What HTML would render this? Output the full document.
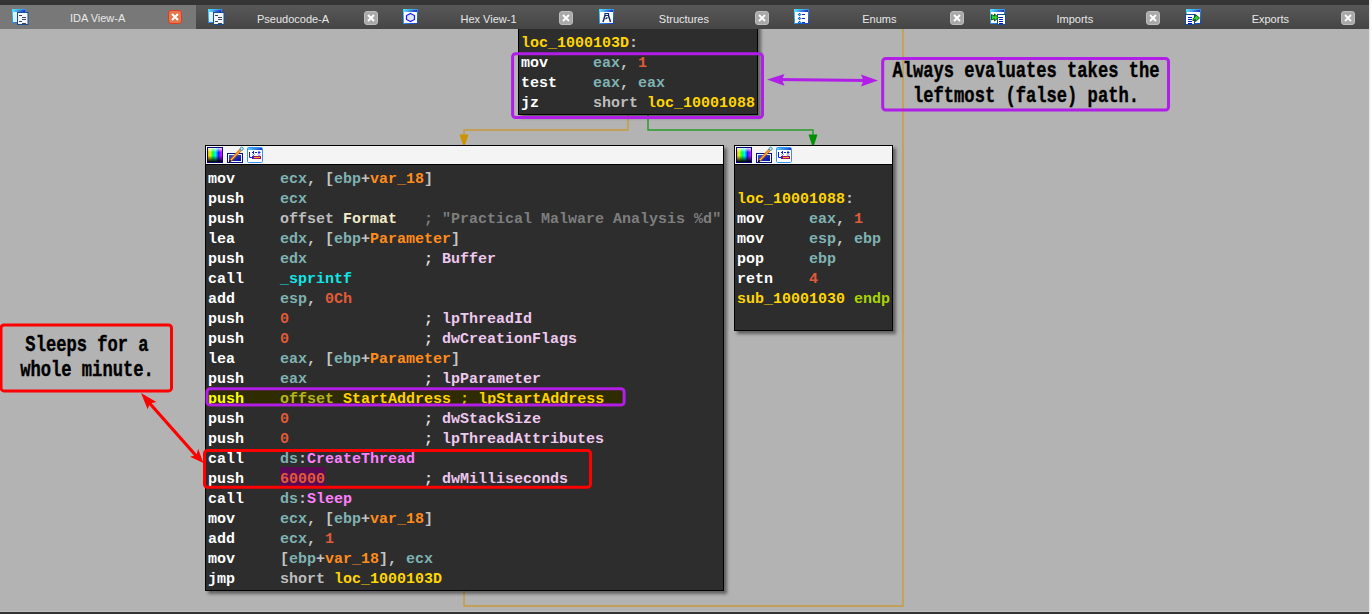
<!DOCTYPE html>
<html><head><meta charset="utf-8">
<style>
html,body{margin:0;padding:0}
body{width:1372px;height:614px;position:relative;overflow:hidden;background:#b3b3b3;font-family:"Liberation Sans",sans-serif}
.abs{position:absolute}
#topstrip{left:0;top:0;width:1369px;height:5px;background:#353535}
#tabbar{left:0;top:5px;width:1369px;height:24px;background:linear-gradient(#585858,#454545)}
#rstrip{left:1369px;top:0;width:3px;height:614px;background:linear-gradient(90deg,#e4e4e4,#fdfdfd 60%)}
#botline{left:0;top:611px;width:1369px;height:1px;background:#bdbdbd}
#botstrip{left:0;top:612px;width:1369px;height:2px;background:#323232}
.tab{position:absolute;top:5px;height:24px;width:195.57px}
.tab.active{background:#787878}
.tab .lbl{position:absolute;top:5px;left:0;width:100%;text-align:center;font-size:11px;color:#e8e8e8;line-height:14px}
.tab .cls{position:absolute;width:12px;height:12px;border:1px solid #bdbdbd;border-radius:3px;background:#a9a9a9;top:6px}
.tab.active .cls{background:#e2784f;border-color:#e03c25;top:5px}
.tab .cls svg{position:absolute;left:2px;top:2px}
.tab .ico{position:absolute;top:4px;width:16px;height:16px}

.node{position:absolute;background:#2d2d2d;border:1px solid #000;box-shadow:3px 3px 3px rgba(0,0,0,0.45)}
.hdr{position:absolute;left:0;right:0;top:0;height:18px;background:#f4f4f4;border-bottom:1px solid #000}
pre{margin:0;position:absolute;font-family:"Liberation Mono",monospace;font-weight:bold;font-size:15px;line-height:20px;color:#fff}
.m{color:#fff}
.r{color:#7fb2b2}
.p{color:#c4c4c4}
.k{color:#bdbdbd}
.n{color:#f0ecc8}
.v{color:#ff8c1a}
.d{color:#e05a38}
.c{color:#dcdcdc}
.ct{color:#eec8ee}
.s{color:#7e7e7e}
.f{color:#10e6e6}
.i{color:#ff80ff}
.l{color:#ffd500}
.e{color:#a8d400}
.note{position:absolute;font-family:"Liberation Mono",monospace;font-weight:bold;color:#000;text-align:center;white-space:pre;font-size:22px;line-height:25px;transform:scaleX(0.778);-webkit-text-stroke:0.4px #000;transform-origin:50% 0;z-index:6}
#topstrip,#tabbar{z-index:8}
.tab,.tabz{z-index:9}
</style></head><body>
<div id="rstrip" class="abs"></div>
<div id="botline" class="abs"></div>
<div id="botstrip" class="abs"></div>
<svg class="abs" style="left:0;top:0" width="1372" height="614">
<g fill="none" stroke-width="1.4">
<path d="M628 114 V130 H464 V136" stroke="#c89c38"/>
<path d="M648 114 V130 H813 V136" stroke="#2a9a2a"/>
<path d="M464 590 V606 H903 V29" stroke="#c89c38"/>
</g>
<path d="M459.5 134.5 H468.5 L465 145 H463 Z" fill="#cc9400"/>
<path d="M808.5 134.5 H817.5 L814 145 H812 Z" fill="#009000"/>
</svg>
<div class="node" style="left:205px;top:145px;width:517px;height:444px"><div class="abs" style="left:0;top:241px;width:418px;height:20px;background:#302c02"></div><div class="abs" style="left:74px;top:321px;width:45px;height:19px;background:#5a0a55"></div><div class="hdr"><svg class="abs" style="left:0;top:0" width="60" height="18">
<defs>
<linearGradient id="rb" x1="0" y1="0" x2="1" y2="0"><stop offset="0" stop-color="#ffa000"/><stop offset=".15" stop-color="#e0ff00"/><stop offset=".35" stop-color="#00ff40"/><stop offset=".55" stop-color="#00f0ff"/><stop offset=".75" stop-color="#2020ff"/><stop offset="1" stop-color="#ff00ff"/></linearGradient>
<linearGradient id="bk" x1="0" y1="0" x2="0" y2="1"><stop offset="0" stop-color="#fff" stop-opacity=".85"/><stop offset=".3" stop-color="#fff" stop-opacity="0"/><stop offset=".55" stop-color="#000" stop-opacity="0"/><stop offset="1" stop-color="#000" stop-opacity="1"/></linearGradient>
<linearGradient id="bl" x1="0" y1="0" x2="1" y2="1"><stop offset="0" stop-color="#3a5ad8"/><stop offset="1" stop-color="#0a0a9a"/></linearGradient>
<linearGradient id="wb" x1="0" y1="0" x2="1" y2="0"><stop offset="0" stop-color="#50d0ff"/><stop offset="1" stop-color="#1a40d0"/></linearGradient>
</defs>
<rect x="1" y="1" width="16" height="16" fill="#040478"/>
<rect x="2" y="2" width="14" height="14" fill="url(#rb)"/>
<rect x="2" y="2" width="14" height="14" fill="url(#bk)"/>
<rect x="21" y="7" width="16" height="10" fill="#04107a"/>
<rect x="22" y="8" width="14" height="8" fill="#f0f8ff"/>
<rect x="23" y="9" width="12" height="6" fill="url(#bl)"/>
<path d="M24.5 14.5 L35 3.5" stroke="#d86a10" stroke-width="2.6"/>
<path d="M24.5 14.5 L35 3.5" stroke="#ffd040" stroke-width="1"/>
<circle cx="35.7" cy="2.8" r="1.6" fill="#c0ecff" stroke="#3090b0" stroke-width="0.9"/>
<path d="M23.2 16 l1.6-1.6" stroke="#000" stroke-width="1.4"/>
<rect x="41.5" y="1.5" width="15" height="15" fill="#fff" stroke="#3c90f0" stroke-width="1" rx="1.2"/>
<rect x="42" y="2" width="14" height="2" fill="url(#wb)"/>
<path d="M43.5 6 V11.5 H47" stroke="#1020e0" stroke-width="1" fill="none"/>
<path d="M46 10 l1.5 1.5 -1.5 1.5" stroke="#1020e0" stroke-width="1" fill="none"/>
<path d="M46 6.5h2M49 6.5h2M52 6.5h2.5M47.5 5v3M53 5v3" stroke="#1020e0" stroke-width="1"/>
<path d="M46.5 8.5l1 1 1-1M52 8.5l1 1 1-1" stroke="#1020e0" stroke-width="0.8" fill="none"/>
<rect x="47" y="10" width="8" height="3" fill="#a01060"/><rect x="48" y="11" width="6" height="1" fill="#ffb020"/>
</svg></div><pre style="left:2px;top:24px">
<span class="m">mov     </span><span class="r">ecx</span><span class="p">, [</span><span class="r">ebp</span><span class="p">+</span><span class="v">var_18</span><span class="p">]</span>
<span class="m">push    </span><span class="r">ecx</span>
<span class="m">push    </span><span class="k">offset</span> <span class="n">Format</span>   <span class="s">; "Practical Malware Analysis %d"</span>
<span class="m">lea     </span><span class="r">edx</span><span class="p">, [</span><span class="r">ebp</span><span class="p">+</span><span class="v">Parameter</span><span class="p">]</span>
<span class="m">push    </span><span class="r">edx</span>             <span class="c">;</span> <span class="ct">Buffer</span>
<span class="m">call    </span><span class="f">_sprintf</span>
<span class="m">add     </span><span class="r">esp</span><span class="p">, </span><span class="d">0Ch</span>
<span class="m">push    </span><span class="d">0</span>               <span class="c">;</span> <span class="ct">lpThreadId</span>
<span class="m">push    </span><span class="d">0</span>               <span class="c">;</span> <span class="ct">dwCreationFlags</span>
<span class="m">lea     </span><span class="r">eax</span><span class="p">, [</span><span class="r">ebp</span><span class="p">+</span><span class="v">Parameter</span><span class="p">]</span>
<span class="m">push    </span><span class="r">eax</span>             <span class="c">;</span> <span class="ct">lpParameter</span>
<span class="hl"><span style="color:#ffff00">push    </span><span style="color:#b4b41e">offset</span> <span style="color:#ffd200">StartAddress</span> <span style="color:#d8c800">;</span> <span style="color:#ffd200">lpStartAddress</span></span>
<span class="m">push    </span><span class="d">0</span>               <span class="c">;</span> <span class="ct">dwStackSize</span>
<span class="m">push    </span><span class="d">0</span>               <span class="c">;</span> <span class="ct">lpThreadAttributes</span>
<span class="m">call    </span><span class="r">ds</span><span class="p">:</span><span class="i">CreateThread</span>
<span class="m">push    </span><span class="d">60000</span>           <span class="c">;</span> <span class="ct">dwMilliseconds</span>
<span class="m">call    </span><span class="r">ds</span><span class="p">:</span><span class="i">Sleep</span>
<span class="m">mov     </span><span class="r">ecx</span><span class="p">, [</span><span class="r">ebp</span><span class="p">+</span><span class="v">var_18</span><span class="p">]</span>
<span class="m">add     </span><span class="r">ecx</span><span class="p">, </span><span class="d">1</span>
<span class="m">mov     </span><span class="p">[</span><span class="r">ebp</span><span class="p">+</span><span class="v">var_18</span><span class="p">], </span><span class="r">ecx</span>
<span class="m">jmp     </span><span class="k">short</span> <span class="l">loc_1000103D</span></pre></div>
<div class="node" style="left:734px;top:145px;width:157px;height:184px"><div class="hdr"><svg class="abs" style="left:0;top:0" width="60" height="18">
<defs>
<linearGradient id="rb" x1="0" y1="0" x2="1" y2="0"><stop offset="0" stop-color="#ffa000"/><stop offset=".15" stop-color="#e0ff00"/><stop offset=".35" stop-color="#00ff40"/><stop offset=".55" stop-color="#00f0ff"/><stop offset=".75" stop-color="#2020ff"/><stop offset="1" stop-color="#ff00ff"/></linearGradient>
<linearGradient id="bk" x1="0" y1="0" x2="0" y2="1"><stop offset="0" stop-color="#fff" stop-opacity=".85"/><stop offset=".3" stop-color="#fff" stop-opacity="0"/><stop offset=".55" stop-color="#000" stop-opacity="0"/><stop offset="1" stop-color="#000" stop-opacity="1"/></linearGradient>
<linearGradient id="bl" x1="0" y1="0" x2="1" y2="1"><stop offset="0" stop-color="#3a5ad8"/><stop offset="1" stop-color="#0a0a9a"/></linearGradient>
<linearGradient id="wb" x1="0" y1="0" x2="1" y2="0"><stop offset="0" stop-color="#50d0ff"/><stop offset="1" stop-color="#1a40d0"/></linearGradient>
</defs>
<rect x="1" y="1" width="16" height="16" fill="#040478"/>
<rect x="2" y="2" width="14" height="14" fill="url(#rb)"/>
<rect x="2" y="2" width="14" height="14" fill="url(#bk)"/>
<rect x="21" y="7" width="16" height="10" fill="#04107a"/>
<rect x="22" y="8" width="14" height="8" fill="#f0f8ff"/>
<rect x="23" y="9" width="12" height="6" fill="url(#bl)"/>
<path d="M24.5 14.5 L35 3.5" stroke="#d86a10" stroke-width="2.6"/>
<path d="M24.5 14.5 L35 3.5" stroke="#ffd040" stroke-width="1"/>
<circle cx="35.7" cy="2.8" r="1.6" fill="#c0ecff" stroke="#3090b0" stroke-width="0.9"/>
<path d="M23.2 16 l1.6-1.6" stroke="#000" stroke-width="1.4"/>
<rect x="41.5" y="1.5" width="15" height="15" fill="#fff" stroke="#3c90f0" stroke-width="1" rx="1.2"/>
<rect x="42" y="2" width="14" height="2" fill="url(#wb)"/>
<path d="M43.5 6 V11.5 H47" stroke="#1020e0" stroke-width="1" fill="none"/>
<path d="M46 10 l1.5 1.5 -1.5 1.5" stroke="#1020e0" stroke-width="1" fill="none"/>
<path d="M46 6.5h2M49 6.5h2M52 6.5h2.5M47.5 5v3M53 5v3" stroke="#1020e0" stroke-width="1"/>
<path d="M46.5 8.5l1 1 1-1M52 8.5l1 1 1-1" stroke="#1020e0" stroke-width="0.8" fill="none"/>
<rect x="47" y="10" width="8" height="3" fill="#a01060"/><rect x="48" y="11" width="6" height="1" fill="#ffb020"/>
</svg></div><pre style="left:2px;top:24px">

<span class="l">loc_10001088</span><span class="p">:</span>
<span class="m">mov     </span><span class="r">eax</span><span class="p">, </span><span class="d">1</span>
<span class="m">mov     </span><span class="r">esp</span><span class="p">, </span><span class="r">ebp</span>
<span class="m">pop     </span><span class="r">ebp</span>
<span class="m">retn    </span><span class="d">4</span>
<span class="l">sub_10001030</span> <span class="e">endp</span></pre></div>
<div class="node" style="left:518px;top:10px;width:238px;height:103px"><pre style="left:2px;top:23px">
<span class="l">loc_1000103D</span><span class="p">:</span>
<span class="m">mov     </span><span class="r">eax</span><span class="p">, </span><span class="d">1</span>
<span class="m">test    </span><span class="r">eax</span><span class="p">, </span><span class="r">eax</span>
<span class="m">jz      </span><span class="k">short</span> <span class="l">loc_10001088</span></pre></div>
<div id="topstrip" class="abs"></div>
<div id="tabbar" class="abs"></div>
<svg width="0" height="0" style="position:absolute"><defs>
<linearGradient id="wg" x1="0" y1="0" x2="1" y2="1"><stop offset="0" stop-color="#49e0ff"/><stop offset="1" stop-color="#1740c8"/></linearGradient>
<linearGradient id="tg" x1="0" y1="0" x2="1" y2="0"><stop offset="0" stop-color="#5fd8ff"/><stop offset="1" stop-color="#2030c0"/></linearGradient>
<linearGradient id="cg" x1="0" y1="0" x2="1" y2="1"><stop offset="0" stop-color="#e6fbff"/><stop offset="1" stop-color="#c8e6ff"/></linearGradient>
</defs></svg>
<div class="tab active" style="left:0.00px"></div>
<div class="tab" style="left:195.50px"></div>
<div class="tab" style="left:391.00px"></div>
<div class="tab" style="left:586.50px"></div>
<div class="tab" style="left:782.00px"></div>
<div class="tab" style="left:977.50px"></div>
<div class="tab" style="left:1173.00px"></div>
<div class="abs tabz" style="left:37.60px;top:11px;width:120px;text-align:center;font-size:11px;line-height:14px;color:#e8e8e8">IDA View-A</div>
<div class="abs tabz" style="left:168.0px;top:10px;width:12px;height:12px;border:1px solid #e03c25;border-radius:3px;background:#e2784f"><svg class="abs" style="left:0;top:0" width="12" height="12"><path d="M3 3L9 9M9 3L3 9" stroke="#fff" stroke-width="1.9"/></svg></div>
<svg class="abs tabz" style="left:12px;top:8px" width="18" height="18"><rect x="0.5" y="1.5" width="13" height="13" fill="url(#cg)" stroke="url(#wg)"/><rect x="1" y="2" width="12" height="2" fill="url(#tg)"/><rect x="5.5" y="4.5" width="10.5" height="12" fill="#f2f6ff" stroke="#1a4a90"/><path d="M7 7.5h3M10 9.5h4M10 11.5h4M7 13.5h3M10 15.5h4" stroke="#3a4652" stroke-width="1"/></svg>
<div class="abs tabz" style="left:233.05px;top:12px;width:120px;text-align:center;font-size:11px;line-height:14px;color:#e8e8e8">Pseudocode-A</div>
<div class="abs tabz" style="left:363.5px;top:11px;width:12px;height:12px;border:1px solid #bdbdbd;border-radius:3px;background:#a9a9a9"><svg class="abs" style="left:0;top:0" width="12" height="12"><path d="M3 3L9 9M9 3L3 9" stroke="#fff" stroke-width="1.9"/></svg></div>
<svg class="abs tabz" style="left:208px;top:8px" width="18" height="18"><rect x="0.5" y="1.5" width="13" height="13" fill="url(#cg)" stroke="url(#wg)"/><rect x="1" y="2" width="12" height="2" fill="url(#tg)"/><rect x="5.5" y="4.5" width="10.5" height="12" fill="#f2f6ff" stroke="#1a4a90"/><path d="M7 7.5h3M10 9.5h4M10 11.5h4M7 13.5h3M10 15.5h4" stroke="#3a4652" stroke-width="1"/></svg>
<div class="abs tabz" style="left:428.50px;top:12px;width:120px;text-align:center;font-size:11px;line-height:14px;color:#e8e8e8">Hex View-1</div>
<div class="abs tabz" style="left:559.0px;top:11px;width:12px;height:12px;border:1px solid #bdbdbd;border-radius:3px;background:#a9a9a9"><svg class="abs" style="left:0;top:0" width="12" height="12"><path d="M3 3L9 9M9 3L3 9" stroke="#fff" stroke-width="1.9"/></svg></div>
<svg class="abs tabz" style="left:403px;top:9px" width="18" height="18"><rect x="0.5" y="0.5" width="14" height="14" fill="#fff" stroke="url(#wg)" stroke-width="1"/><rect x="1" y="1" width="13" height="2" fill="url(#tg)"/><path d="M7.5 4.5 L11.5 6.5 L11.5 10.5 L7.5 12.5 L3.5 10.5 L3.5 6.5 Z" fill="#dce8ff" stroke="#1a1aff" stroke-width="1.2"/></svg>
<div class="abs tabz" style="left:623.95px;top:12px;width:120px;text-align:center;font-size:11px;line-height:14px;color:#e8e8e8">Structures</div>
<div class="abs tabz" style="left:754.5px;top:11px;width:12px;height:12px;border:1px solid #bdbdbd;border-radius:3px;background:#a9a9a9"><svg class="abs" style="left:0;top:0" width="12" height="12"><path d="M3 3L9 9M9 3L3 9" stroke="#fff" stroke-width="1.9"/></svg></div>
<svg class="abs tabz" style="left:599px;top:9px" width="18" height="18"><rect x="0.5" y="0.5" width="14" height="14" fill="#fff" stroke="url(#wg)" stroke-width="1"/><rect x="1" y="1" width="13" height="2" fill="url(#tg)"/><path d="M6 4.5h3.5v2h-3.5z" fill="#fff" stroke="#0a2a70" stroke-width="1.2"/><path d="M6 6.5 L4 13 M9.5 6.5 L11.5 13 M6.5 10 L8.5 8.5" stroke="#0a2a70" stroke-width="1.5" fill="none"/></svg>
<div class="abs tabz" style="left:819.40px;top:12px;width:120px;text-align:center;font-size:11px;line-height:14px;color:#e8e8e8">Enums</div>
<div class="abs tabz" style="left:950.0px;top:11px;width:12px;height:12px;border:1px solid #bdbdbd;border-radius:3px;background:#a9a9a9"><svg class="abs" style="left:0;top:0" width="12" height="12"><path d="M3 3L9 9M9 3L3 9" stroke="#fff" stroke-width="1.9"/></svg></div>
<svg class="abs tabz" style="left:794px;top:9px" width="18" height="18"><rect x="0.5" y="0.5" width="14" height="14" fill="#fff" stroke="url(#wg)" stroke-width="1"/><rect x="1" y="1" width="13" height="2" fill="url(#tg)"/><path d="M5.5 4.2l1.3 1.3-1.3 1.3-1.3-1.3zM5.5 8.2l1.3 1.3-1.3 1.3-1.3-1.3zM5.5 12.2l1.3 1.3-1.3 1.3-1.3-1.3z" fill="#00e0ff" stroke="#0020b0" stroke-width="0.9"/><path d="M8 5.5h3M8 9.5h3M8 13.5h3" stroke="#0030d0" stroke-width="1.2"/></svg>
<div class="abs tabz" style="left:1014.85px;top:12px;width:120px;text-align:center;font-size:11px;line-height:14px;color:#e8e8e8">Imports</div>
<div class="abs tabz" style="left:1145.5px;top:11px;width:12px;height:12px;border:1px solid #bdbdbd;border-radius:3px;background:#a9a9a9"><svg class="abs" style="left:0;top:0" width="12" height="12"><path d="M3 3L9 9M9 3L3 9" stroke="#fff" stroke-width="1.9"/></svg></div>
<svg class="abs tabz" style="left:990px;top:9px" width="18" height="18"><rect x="0.5" y="0.5" width="14" height="14" fill="#fff" stroke="url(#wg)" stroke-width="1"/><rect x="1" y="1" width="13" height="2" fill="url(#tg)"/><rect x="7.5" y="5.5" width="8" height="10" fill="#fff" stroke="#184a9a"/><path d="M9 8.5h4M9 10.5h4M9 12.5h4M9 14.5h4" stroke="#0018c8"/><path d="M1.5 5.5 Q3 6.5 4.5 7 L4.5 5 L8.5 8.5 L4.5 12 L4.5 10 Q3 10 1.5 11 Z" fill="#30d030" stroke="#064a06" stroke-width="0.9"/></svg>
<div class="abs tabz" style="left:1210.30px;top:12px;width:120px;text-align:center;font-size:11px;line-height:14px;color:#e8e8e8">Exports</div>
<div class="abs tabz" style="left:1341.0px;top:11px;width:12px;height:12px;border:1px solid #bdbdbd;border-radius:3px;background:#a9a9a9"><svg class="abs" style="left:0;top:0" width="12" height="12"><path d="M3 3L9 9M9 3L3 9" stroke="#fff" stroke-width="1.9"/></svg></div>
<svg class="abs tabz" style="left:1185px;top:9px" width="18" height="18"><rect x="1.5" y="0.5" width="14" height="14" fill="#fff" stroke="url(#wg)" stroke-width="1"/><rect x="2" y="1" width="13" height="2" fill="url(#tg)"/><rect x="0.5" y="5.5" width="9" height="10" fill="#fff" stroke="#184a9a"/><path d="M3 8.5h4M3 10.5h4M3 12.5h4M3 14.5h4" stroke="#0018c8"/><path d="M8 10 Q9 8 10.5 7.5 L10.5 5.5 L14.5 9 L10.5 12.5 L10.5 10.5 Q9 10.5 8 12 Z" fill="#30d030" stroke="#064a06" stroke-width="0.9"/></svg>
<svg class="abs" style="left:0;top:0;z-index:5" width="1372" height="614">
<g fill="none" stroke-width="3">
<rect x="512.6" y="53.8" width="249.9" height="63.7" rx="3" stroke="#b01ee8"/>
<rect x="882.7" y="58.5" width="285.8" height="51.5" rx="3" stroke="#b01ee8"/>
<rect x="207" y="388.7" width="417.1" height="16.3" rx="3" stroke="#b01ee8"/>
<rect x="1" y="324.9" width="170.5" height="66" rx="3" stroke="#ff0000"/>
<rect x="204.5" y="450.5" width="386" height="36.8" rx="3" stroke="#ff0000"/>
</g>
<path d="M776 79.5 L869 80.5" stroke="#b01ee8" stroke-width="3.2"/>
<path d="M767 79.5 L784.5 74 L782 79.6 L784.5 85.7 Z" fill="#b01ee8"/>
<path d="M878 80.4 L861 74.5 L863.5 80.4 L861 86.6 Z" fill="#b01ee8"/>
<path d="M145 398 L199 459" stroke="#ff0000" stroke-width="3.2"/>
<path d="M141 393 L156.4 401.9 L150 403.5 L147.6 409.2 Z" fill="#ff0000"/>
<path d="M203.3 463 L190 456.8 L196.5 455 L198.2 448.8 Z" fill="#ff0000"/>
</svg>
<div class="note" style="left:825.5px;top:59px;width:400px;">Always evaluates takes the
leftmost (false) path.</div>
<div class="note" style="left:-113.5px;top:333px;width:400px;">Sleeps for a
whole minute.</div>

</body></html>
